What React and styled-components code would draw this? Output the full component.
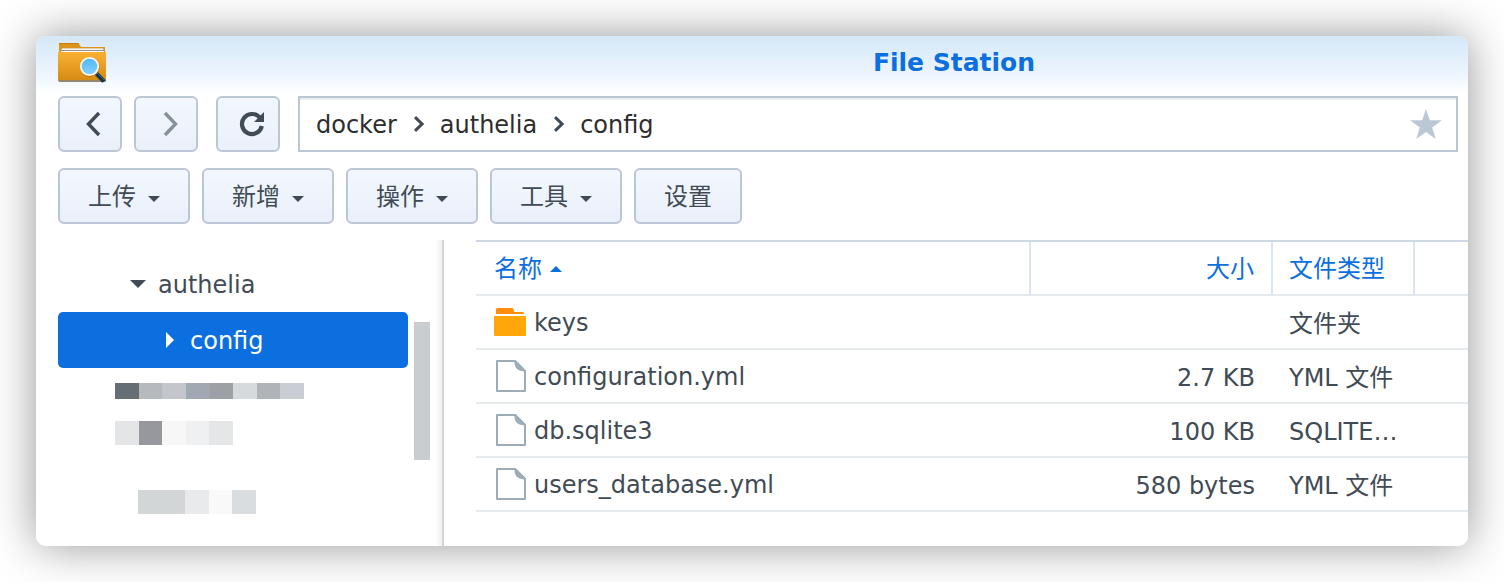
import React from "react";
import styled, { createGlobalStyle, css } from "styled-components";

const color = {
  text: "#414b55",
  blue: "#0c6fdf",
  border: "#bcc7d6",
  line: "#e5eaef",
};

const GlobalStyle = createGlobalStyle`
  *, *::before, *::after { box-sizing: border-box; }
  body {
    margin: 0;
    background: #fff;
    color: ${color.text};
    font-family: "DejaVu Sans", "Noto Sans CJK SC", sans-serif;
    font-size: 24px;
    line-height: 32px;
  }
  button { font: inherit; color: inherit; }
  ul, ol { list-style: none; margin: 0; padding: 0; }
`;

const Page = styled.div`
  min-height: 100vh;
  padding: 36px;
  display: flex;
`;

const Window = styled.section`
  flex: 1;
  min-width: 0;
  display: flex;
  flex-direction: column;
  border-radius: 10px;
  overflow: hidden;
  background: linear-gradient(#d4e8f8 0, #e8f2fd 30px, #f4f9ff 46px, #fff 58px);
  box-shadow: 0 0 46px rgba(0, 0, 0, 0.42);
`;

const TitleBar = styled.header`
  display: flex;
  height: 60px;
  padding-left: 22px;
`;

const TitleIcon = styled.div`
  flex: none;
  width: 382px;
  padding-top: 6px;
  svg { display: block; }
`;

const Title = styled.h1`
  flex: 1;
  margin: 0;
  text-align: center;
  font-size: 25px;
  line-height: 54px;
  font-weight: bold;
  color: ${color.blue};
`;

const NavBar = styled.div`
  display: flex;
  gap: 18px;
  padding: 0 10px 16px 22px;
`;

const NavGroup = styled.div`
  display: flex;
  gap: 12px;
`;

const buttonFace = css`
  height: 56px;
  border: 2px solid ${color.border};
  border-radius: 6px;
  background: linear-gradient(#f3f8ff, #eaf0f9);
`;

const NavButton = styled.button`
  ${buttonFace}
  flex: none;
  width: 64px;
  padding: 0;
  color: ${(p) => (p.$dim ? "#87919b" : color.text)};
  svg { display: block; }
`;

const PathBar = styled.nav`
  flex: 1;
  min-width: 0;
  display: flex;
  align-items: center;
  justify-content: space-between;
  height: 56px;
  padding: 0 14px 0 16px;
  border: 2px solid ${color.border};
  background: #fff;
  box-shadow: inset 0 2px #eee;
`;

const Crumbs = styled.ol`
  display: flex;
  align-items: center;
  gap: 16px;
`;

const Crumb = styled.li`
  display: flex;
  align-items: center;
  gap: 16px;
`;

const CrumbLink = styled.a`
  padding-top: 2px;
  color: #2d2d2d;
  text-decoration: none;
`;

const StarButton = styled.button`
  padding: 0;
  border: 0;
  background: none;
  color: ${color.border};
  svg { display: block; }
`;

const Toolbar = styled.div`
  display: flex;
  gap: 12px;
  padding: 0 22px 16px;
`;

const Label = styled.span`
  padding-top: 2px;
`;

const ToolButton = styled.button`
  ${buttonFace}
  display: flex;
  align-items: center;
  gap: 12px;
  padding: 0 28px;
  white-space: nowrap;
`;

const Body = styled.div`
  flex: 1;
  display: grid;
  grid-template-columns: 408px minmax(0, 1fr);
`;

const Sidebar = styled.aside`
  display: flex;
  padding-left: 22px;
`;

const Tree = styled.ul`
  flex: 1;
  padding-top: 16px;
`;

const TreeNode = styled.button`
  display: flex;
  align-items: center;
  gap: 12px;
  width: 100%;
  height: 56px;
  padding: 0 0 0 ${(p) => 72 + p.$level * 32}px;
  border: 0;
  border-radius: 5px;
  background: ${(p) => (p.$selected ? color.blue : "transparent")};
  color: ${(p) => (p.$selected ? "#fff" : color.text)};
`;

const Masked = styled.li`
  display: flex;
  width: ${(p) => p.$width}px;
  height: ${(p) => p.$height}px;
  margin: ${(p) => p.$gap}px 0 0 ${(p) => p.$indent}px;
`;

const MaskedCell = styled.span`
  flex: 1;
  background: ${(p) => p.$tone};
`;

const ScrollThumb = styled.div`
  width: 16px;
  height: 138px;
  margin: 82px 4px 0 6px;
  background: #c9cdd0;
`;

const Splitter = styled.div`
  width: 10px;
  border-right: 2px solid #d4d4d4;
  background: linear-gradient(90deg, #fff 20%, #f0f0f0);
`;

const Main = styled.main`
  padding-left: 32px;
`;

const FileTable = styled.table`
  width: 100%;
  table-layout: fixed;
  border-collapse: separate;
  border-spacing: 0;
  border-top: 2px solid #cfd9e6;
`;

const cell = css`
  height: 54px;
  padding: 2px 17px 0 16px;
  border-bottom: 2px solid ${color.line};
  text-align: ${(p) => (p.$right ? "right" : "left")};
  font-weight: normal;
  white-space: nowrap;
`;

const HeadCell = styled.th`
  ${cell}
  width: ${(p) => p.$width}px;
  color: ${color.blue};
  border-right: ${(p) => (p.$last ? "0" : "2px solid #dbe5f1")};
`;

const Cell = styled.td`
  ${cell}
  padding-top: 4px;
  padding-right: ${(p) => (p.$right ? 18 : 0)}px;
`;

const NameCell = styled(Cell)`
  padding-top: 0;
  padding-left: 18px;
`;

const NameHead = styled(HeadCell)`
  padding-left: 18px;
`;

const Inline = styled.div`
  display: flex;
  align-items: center;
  gap: 8px;
  svg { flex: none; }
`;

const AppIcon = () => (
  <svg width="48" height="42" viewBox="0 0 48 42" aria-hidden="true">
    <defs>
      <linearGradient id="front" x1="0" y1="0" x2="0" y2="1">
        <stop offset="0" stopColor="#fbb034" />
        <stop offset="1" stopColor="#d68c12" />
      </linearGradient>
      <linearGradient id="lens" x1="0" y1="0" x2="0" y2="1">
        <stop offset="0" stopColor="#4fb6f5" />
        <stop offset="1" stopColor="#83d3ff" />
      </linearGradient>
    </defs>
    <path d="M1 1h19.500l2.500 4h24v6H1z" fill="#dd941c" />
    <path d="M1 1h19.500l.7 1H1z" fill="#c47f10" />
    <path d="M3 10V6.500H46V10z" fill="#b9b0a0" />
    <path d="M4 6.500h41v1.500H4z" fill="#f7f7f7" />
    <path d="M3 8h43v1H3z" fill="#8f8f8b" />
    <path d="M3 9h43v1H3z" fill="#fff" />
    <path d="M0 37.500h48v1.500q0 1-1 1H2q-2 0-2-2z" fill="#6f552b" opacity=".7" />
    <path d="M0 10h48v27q0 1-1 1H1q-1 0-1-1z" fill="url(#front)" />
    <path d="M39 32.500l6.500 6.500" stroke="#6b4a12" strokeWidth="5" opacity=".35" />
    <path d="M38.500 31.500l7.500 8" stroke="#0c3455" strokeWidth="4" />
    <path d="M39 31l7 7" stroke="#2d6791" strokeWidth="1" />
    <circle cx="32" cy="25.500" r="9.700" fill="#8a5d10" opacity=".35" />
    <circle cx="31.500" cy="24.500" r="8.700" fill="url(#lens)" stroke="#fff9ec" strokeWidth="1.800" />
  </svg>
);

const navStroke = { fill: "none", stroke: "currentColor", strokeWidth: 3.4, strokeLinejoin: "miter" };

const BackIcon = () => (
  <svg width="60" height="52" viewBox="0 0 60 52" aria-hidden="true">
    <path d="M39 15L28.500 26L39 37" {...navStroke} />
  </svg>
);

const ForwardIcon = () => (
  <svg width="60" height="52" viewBox="0 0 60 52" aria-hidden="true">
    <path d="M29 15L39.500 26L29 37" {...navStroke} />
  </svg>
);

const RefreshIcon = () => (
  <svg width="60" height="52" viewBox="0 0 60 52" aria-hidden="true">
    <path d="M43.800 28A10 10 0 1 1 42 20" fill="none" stroke="currentColor" strokeWidth="4.200" />
    <path d="M46 14V24H36z" fill="currentColor" />
  </svg>
);

const CrumbArrow = () => (
  <svg width="11" height="16" viewBox="0 0 11 16" aria-hidden="true">
    <path d="M2 1.200L9 8L2 14.800" fill="none" stroke={color.text} strokeWidth="3" />
  </svg>
);

const StarIcon = () => (
  <svg width="32" height="30" viewBox="0 0 32 30" aria-hidden="true">
    <path d="M16 0L19.800 11.300H32L22.200 18.500L25.800 30L16 23L6.200 30L9.800 18.500L0 11.300H12.200z" fill="currentColor" />
  </svg>
);

const MenuCaret = () => (
  <svg width="12" height="12" viewBox="0 0 12 12" aria-hidden="true">
    <path d="M0 6H12L6 12z" fill="currentColor" />
  </svg>
);

const SortCaret = () => (
  <svg width="12" height="6" viewBox="0 0 12 6" aria-hidden="true">
    <path d="M0 6L6 0L12 6z" fill="currentColor" />
  </svg>
);

const TreeCaret = ({ open }) => (
  <svg width="16" height="16" viewBox="0 0 16 16" aria-hidden="true">
    <path d={open ? "M0 4H16L8 12z" : "M4 0L12 8L4 16z"} fill="currentColor" />
  </svg>
);

const FolderIcon = () => (
  <svg width="32" height="32" viewBox="0 0 32 32" aria-hidden="true">
    <path d="M2 8V3.500Q2 2 3.500 2H18Q19.500 2 19.700 3.500L20 6H29Q30 6 30 8z" fill="#ff8c0a" />
    <path d="M0 10H32V29Q32 30 31 30H1Q0 30 0 29z" fill="#ffa60a" />
  </svg>
);

const FileIcon = () => (
  <svg width="32" height="32" viewBox="0 0 32 32" aria-hidden="true">
    <path d="M3 1H21L31 11V31H3z" fill="#fff" stroke="#9dadb8" strokeWidth="2" strokeLinejoin="round" />
    <path d="M20 0H21.500L32 10.500V12L28 11C23 10.500 20.500 7 20.500 2z" fill="#9dadb8" />
  </svg>
);

const crumbs = ["docker", "authelia", "config"];

const tools = [
  { label: "上传", menu: true },
  { label: "新增", menu: true },
  { label: "操作", menu: true },
  { label: "工具", menu: true },
  { label: "设置", menu: false },
];

const masked = [
  { gap: 15, indent: 57, width: 189, height: 16, tones: ["#656d75", "#b6b9be", "#c3c6cc", "#a2a8b1", "#9da0a5", "#d6dadd", "#b0b3b8", "#cacdd3"] },
  { gap: 22, indent: 57, width: 118, height: 24, tones: ["#e4e5e7", "#96989d", "#f7f7f7", "#eef0f1", "#e5e6e8"] },
  { gap: 45, indent: 80, width: 118, height: 24, tones: ["#d2d6d7", "#d2d6d7", "#e9eaec", "#f9f9f9", "#d9dddf"] },
];

const files = [
  { name: "keys", size: "", type: "文件夹", folder: true },
  { name: "configuration.yml", size: "2.7 KB", type: "YML 文件" },
  { name: "db.sqlite3", size: "100 KB", type: "SQLITE…" },
  { name: "users_database.yml", size: "580 bytes", type: "YML 文件" },
];

export default function App() {
  return (
    <>
      <GlobalStyle />
      <Page>
        <Window>
          <TitleBar>
            <TitleIcon><AppIcon /></TitleIcon>
            <Title>File Station</Title>
          </TitleBar>

          <NavBar>
            <NavGroup>
              <NavButton type="button" aria-label="后退"><BackIcon /></NavButton>
              <NavButton type="button" aria-label="前进" $dim><ForwardIcon /></NavButton>
            </NavGroup>
            <NavButton type="button" aria-label="刷新"><RefreshIcon /></NavButton>
            <PathBar>
              <Crumbs>
                {crumbs.map((name, i) => (
                  <Crumb key={name}>
                    {i > 0 && <CrumbArrow />}
                    <CrumbLink href="#">{name}</CrumbLink>
                  </Crumb>
                ))}
              </Crumbs>
              <StarButton type="button" aria-label="收藏"><StarIcon /></StarButton>
            </PathBar>
          </NavBar>

          <Toolbar>
            {tools.map((tool) => (
              <ToolButton key={tool.label} type="button">
                <Label>{tool.label}</Label>
                {tool.menu && <MenuCaret />}
              </ToolButton>
            ))}
          </Toolbar>

          <Body>
            <Sidebar>
              <Tree>
                <li>
                  <TreeNode type="button" $level={0}><TreeCaret open /><Label>authelia</Label></TreeNode>
                </li>
                <li>
                  <TreeNode type="button" $level={1} $selected><TreeCaret /><Label>config</Label></TreeNode>
                </li>
                {masked.map((row, i) => (
                  <Masked key={i} $gap={row.gap} $indent={row.indent} $width={row.width} $height={row.height}>
                    {row.tones.map((tone, j) => <MaskedCell key={j} $tone={tone} />)}
                  </Masked>
                ))}
              </Tree>
              <ScrollThumb />
              <Splitter />
            </Sidebar>

            <Main>
              <FileTable>
                <thead>
                  <tr>
                    <NameHead><Inline>名称<SortCaret /></Inline></NameHead>
                    <HeadCell $width={242} $right>大小</HeadCell>
                    <HeadCell $width={142}>文件类型</HeadCell>
                    <HeadCell as="td" $width={53} $last />
                  </tr>
                </thead>
                <tbody>
                  {files.map((file) => (
                    <tr key={file.name}>
                      <NameCell>
                        <Inline>
                          {file.folder ? <FolderIcon /> : <FileIcon />}
                          <Label>{file.name}</Label>
                        </Inline>
                      </NameCell>
                      <Cell $right>{file.size}</Cell>
                      <Cell>{file.type}</Cell>
                      <Cell />
                    </tr>
                  ))}
                </tbody>
              </FileTable>
            </Main>
          </Body>
        </Window>
      </Page>
    </>
  );
}
